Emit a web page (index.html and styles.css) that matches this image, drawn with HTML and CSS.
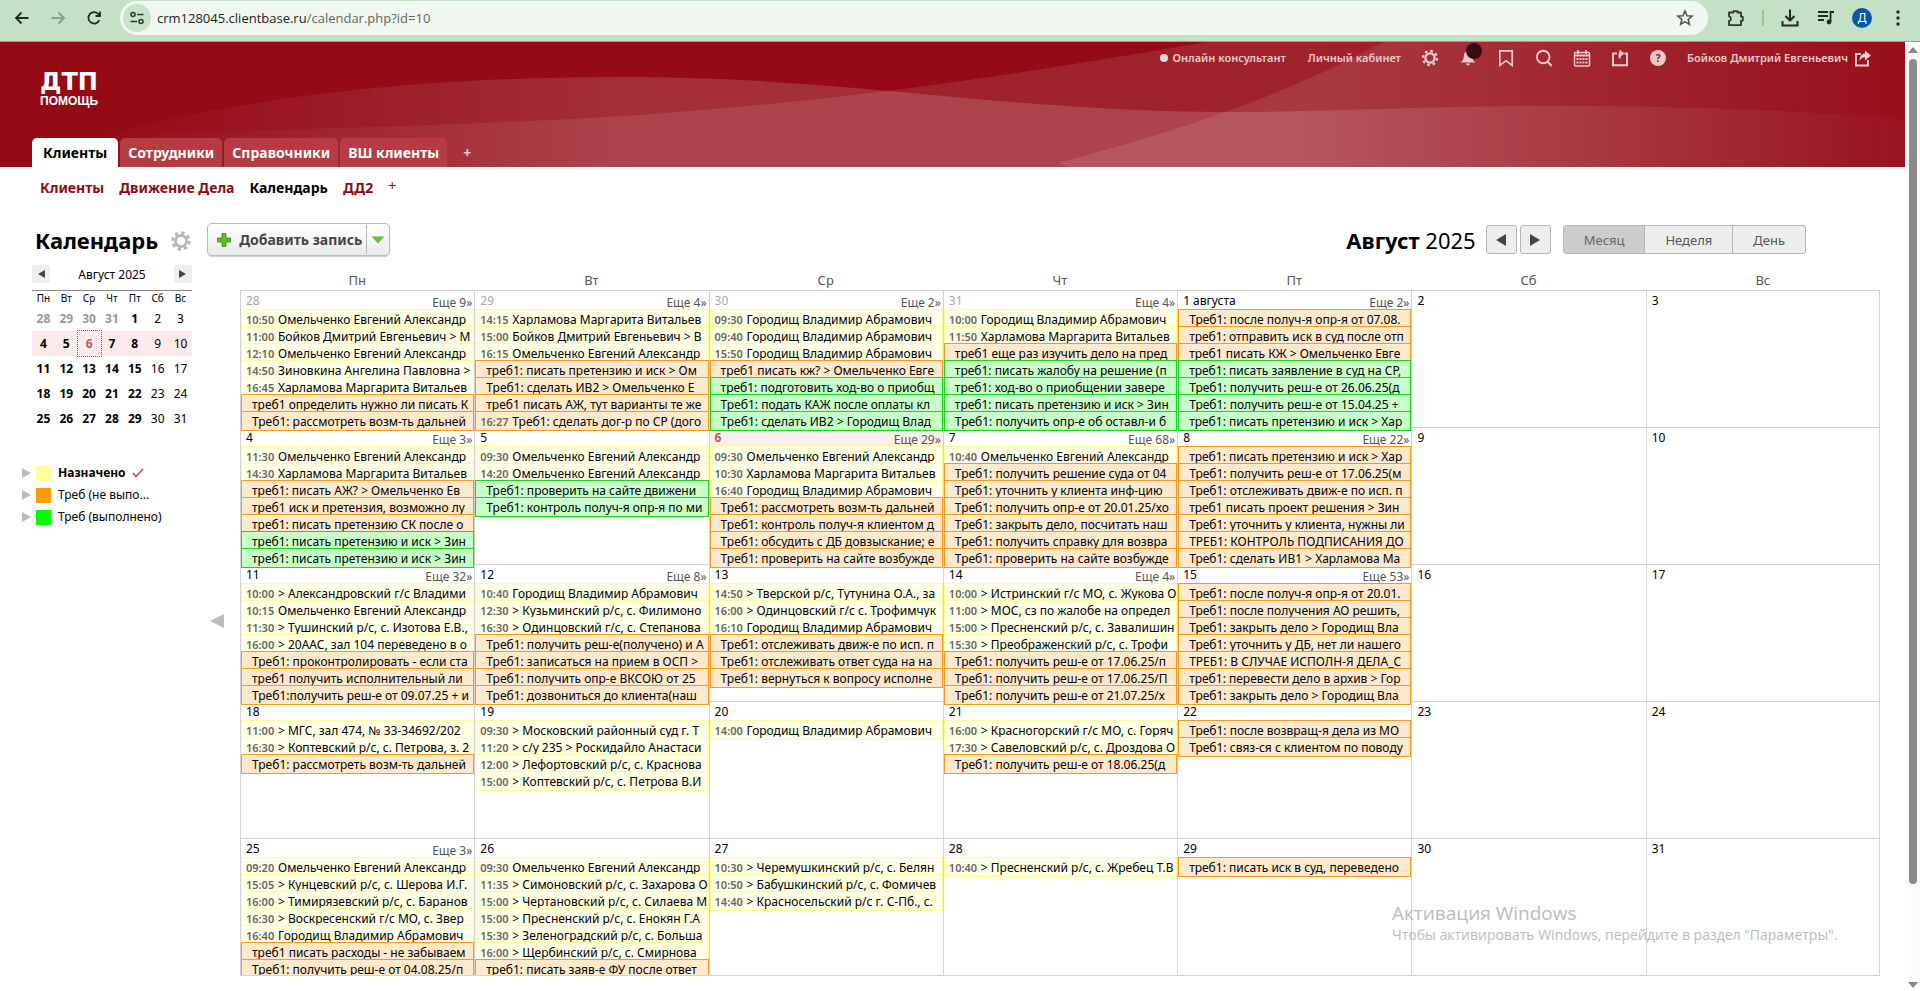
FILE: index.html
```html
<!DOCTYPE html>
<html lang="ru">
<head>
<meta charset="utf-8">
<title>Календарь</title>
<link rel="stylesheet" href="styles.css">
</head>
<body>
<div class="browser">
  <div class="browser-nav">
    <button class="tool" aria-label="Назад"><svg width="20" height="20" viewBox="0 0 20 20"><path d="M16.500 10H4M9.500 4.500L4 10l5.500 5.500" fill="none" stroke="#1f2a20" stroke-width="1.800"/></svg></button>
    <button class="tool" aria-label="Вперёд"><svg width="20" height="20" viewBox="0 0 20 20"><path d="M3.500 10H16M10.500 4.500L16 10l-5.500 5.500" fill="none" stroke="#84a085" stroke-width="1.800"/></svg></button>
    <button class="tool" aria-label="Обновить"><svg width="20" height="20" viewBox="0 0 20 20"><path d="M15.300 12.200A5.700 5.700 0 1 1 14.600 6.300L16 7.800M16 3.500V8h-4.500" fill="none" stroke="#1f2a20" stroke-width="1.800"/></svg></button>
  </div>
  <div class="address">
    <span class="site-info"><svg width="16" height="16" viewBox="0 0 16 16"><g fill="none" stroke="#2c3a2d" stroke-width="1.600"><circle cx="4" cy="4.500" r="2"/><path d="M8 4.500h6.500M1.500 11.500H8"/><circle cx="12" cy="11.500" r="2"/></g></svg></span>
    <span class="url"><span class="host">crm128045.clientbase.ru</span>/calendar.php?id=10</span>
    <button class="tool star" aria-label="В закладки"><svg width="18" height="18" viewBox="0 0 18 18"><path d="M9 2l2 4.700 5.100.4-3.900 3.300 1.200 5L9 12.700l-4.400 2.700 1.200-5L1.900 7.100 7 6.700z" fill="none" stroke="#4a554b" stroke-width="1.500"/></svg></button>
  </div>
  <div class="browser-tools">
    <button class="tool" aria-label="Расширения"><svg width="20" height="20" viewBox="0 0 20 20"><path d="M3 4.500h4.500V3.200h4v1.300H15v4.200l1.800.3v3.500l-1.800.4v4.300H3v-4.300c2.600-.5 2.600-4 0-4.500z" fill="none" stroke="#2c382d" stroke-width="1.800" stroke-linejoin="round"/></svg></button>
    <span class="tool-rule"></span>
    <button class="tool" aria-label="Загрузки"><svg width="20" height="20" viewBox="0 0 20 20"><path d="M10 1.500v10.500M5.500 8L10 12.500 14.500 8M2.500 13v4.500h15V13" fill="none" stroke="#1f2a20" stroke-width="2"/></svg></button>
    <button class="tool" aria-label="Медиа"><svg width="20" height="20" viewBox="0 0 20 20"><path d="M2 4h10M2 8h10M2 12h6M14.500 14V4H18" fill="none" stroke="#1f2a20" stroke-width="1.800"/><circle cx="13" cy="14" r="2.400" fill="#1f2a20"/></svg></button>
    <button class="avatar">Д</button>
    <button class="tool" aria-label="Меню"><svg width="20" height="20" viewBox="0 0 20 20"><g fill="#1f2a20"><circle cx="10" cy="4" r="1.700"/><circle cx="10" cy="10" r="1.700"/><circle cx="10" cy="16" r="1.700"/></g></svg></button>
  </div>
</div>

<div class="viewport">
<div class="page">
<header class="header">
  <svg class="waves" viewBox="0 0 1905 125" preserveAspectRatio="none" aria-hidden="true">
    <defs>
      <linearGradient id="g1" gradientUnits="userSpaceOnUse" x1="80" x2="1905" y1="0" y2="0"><stop offset="0" stop-color="#fff" stop-opacity="0"/><stop offset=".3" stop-color="#fff" stop-opacity=".15"/><stop offset=".65" stop-color="#fff" stop-opacity=".15"/><stop offset="1" stop-color="#fff" stop-opacity=".02"/></linearGradient>
      <linearGradient id="g2" gradientUnits="userSpaceOnUse" x1="80" x2="1905" y1="0" y2="0"><stop offset="0" stop-color="#fff" stop-opacity="0"/><stop offset=".3" stop-color="#fff" stop-opacity=".1"/><stop offset=".68" stop-color="#fff" stop-opacity=".1"/><stop offset="1" stop-color="#fff" stop-opacity=".01"/></linearGradient>
    </defs>
    <path fill="url(#g1)" d="M60 103C200 66 360 36 612 35C850 34 1000 70 1230 70C1340 70 1420 64 1560 64C1700 64 1820 70 1905 77V125H60z"/>
    <path fill="url(#g2)" d="M60 94C300 88 500 82 640 73C850 58 1000 35 1207 0H1905V125H60z"/>
    <path fill="url(#g2)" d="M1058 121C1180 88 1270 60 1384 0H1905V125H1070z"/>
  </svg>
  <div class="topline">
    <a class="online" href="#">Онлайн консультант</a>
    <a class="cabinet" href="#">Личный кабинет</a>
    <span class="icons">
      <button class="hicon" aria-label="Настройки"><svg width="18" height="18" viewBox="0 0 18 18"><circle cx="9" cy="9" r="4.600" fill="none" stroke="currentColor" stroke-width="2.400"/><circle cx="9" cy="9" r="7" fill="none" stroke="currentColor" stroke-width="2.400" stroke-dasharray="2.700 2.798"/></svg></button>
      <button class="hicon" aria-label="Уведомления"><svg width="18" height="18" viewBox="0 0 18 18"><path d="M9 2c-3 .3-4.200 2.500-4.200 5.300 0 3-1.300 4.700-3.300 6.200h15c-2-1.500-3.300-3.200-3.300-6.200C13.200 4.500 12 2.300 9 2zM7 14.500h4c0 2.600-4 2.600-4 0z" fill="currentColor"/></svg><span class="badge"></span></button>
      <button class="hicon" aria-label="Закладки"><svg width="18" height="18" viewBox="0 0 18 18"><path d="M2.800 1.800h12.400v14.700L9 11.700l-6.200 4.800z" fill="none" stroke="currentColor" stroke-width="1.700"/></svg></button>
      <button class="hicon" aria-label="Поиск"><svg width="18" height="18" viewBox="0 0 18 18"><circle cx="8.200" cy="8" r="6.300" fill="none" stroke="currentColor" stroke-width="1.900"/><path d="M12.700 12.700l4 4.300" stroke="currentColor" stroke-width="2.200"/></svg></button>
      <button class="hicon" aria-label="Календарь"><svg width="18" height="18" viewBox="0 0 18 18"><rect x="1.500" y="3.500" width="15" height="13.500" rx="1" fill="none" stroke="currentColor" stroke-width="1.500"/><path d="M1.500 6.500h15M5 1v4M13 1v4" stroke="currentColor" stroke-width="1.800"/><path d="M3.500 10h11M3.500 13.500h11" stroke="currentColor" stroke-width="2.200" stroke-dasharray="2 1"/></svg></button>
      <button class="hicon" aria-label="Обмен"><svg width="18" height="18" viewBox="0 0 18 18"><path d="M6 4.500H2v11.700h14V4.500h-2.500" fill="none" stroke="currentColor" stroke-width="2"/><path d="M7.600 9.500V3.600h2V9.500z" fill="currentColor"/><path d="M8.500 .500l5 4-5 4z" fill="currentColor"/></svg></button>
      <button class="hicon" aria-label="Помощь"><span class="help">?</span></button>
    </span>
    <a class="user" href="#">Бойков Дмитрий Евгеньевич</a>
    <button class="hicon" aria-label="Выход"><svg width="18" height="18" viewBox="0 0 18 18"><path d="M7 5H2v11.500h12V11" fill="none" stroke="currentColor" stroke-width="1.900"/><path d="M5.500 12.500C5.500 7 8 4.800 11 4.600V1.500l6 5-6 5V8.300c-2.500 0-4.200 1-5.500 4.200z" fill="currentColor"/></svg></button>
  </div>
  <a class="logo" href="#"><span class="logo-top">ДТП</span><span class="logo-sub">ПОМОЩЬ</span></a>
  <nav class="tabs">
    <a class="tab active" href="#">Клиенты</a>
    <a class="tab" href="#">Сотрудники</a>
    <a class="tab" href="#">Справочники</a>
    <a class="tab" href="#">ВШ клиенты</a>
    <a class="tab-add" href="#">+</a>
  </nav>
</header>

<nav class="subnav">
  <a href="#">Клиенты</a>
  <a href="#">Движение Дела</a>
  <a class="current" href="#">Календарь</a>
  <a href="#">ДД2</a>
  <a class="sub-add" href="#">+</a>
</nav>

<div class="titlebar">
  <h1>Календарь</h1>
  <button class="gear" aria-label="Настройка календаря"><svg width="20" height="20" viewBox="0 0 20 20"><circle cx="10" cy="10" r="5.600" fill="none" stroke="#b5b5b5" stroke-width="2.600"/><circle cx="10" cy="10" r="8.300" fill="none" stroke="#b5b5b5" stroke-width="2.800" stroke-dasharray="3.300 3.219"/></svg></button>
  <div class="add">
    <button class="add-main"><svg width="14" height="14" viewBox="0 0 14 14"><path d="M5 .500h4V5h4.500v4H9v4.500H5V9H.500V5H5z" fill="#62b92f" stroke="#4a9a22"/></svg>Добавить запись</button>
    <button class="add-more" aria-label="Ещё"><svg width="14" height="8" viewBox="0 0 14 8"><path d="M.500.500h13L7 7.500z" fill="#6cbf35"/></svg></button>
  </div>
  <h2><b>Август</b> 2025</h2>
  <button class="step" aria-label="Предыдущий месяц"><svg width="10" height="12" viewBox="0 0 10 12"><path d="M10 0v12L0 6z" fill="#444"/></svg></button>
  <button class="step" aria-label="Следующий месяц"><svg width="10" height="12" viewBox="0 0 10 12"><path d="M0 0v12l10-6z" fill="#444"/></svg></button>
  <div class="modes">
    <button class="mode on">Месяц</button><button class="mode">Неделя</button><button class="mode">День</button>
  </div>
</div>

<main class="content">
<aside class="side">
  <div class="mini-head">
    <button aria-label="Назад"><svg width="7" height="8" viewBox="0 0 7 8"><path d="M7 0v8L0 4z" fill="#444"/></svg></button>
    <span>Август 2025</span>
    <button aria-label="Вперёд"><svg width="7" height="8" viewBox="0 0 7 8"><path d="M0 0v8l7-4z" fill="#444"/></svg></button>
  </div>
  <table class="mini">
    <thead><tr><th>Пн</th><th>Вт</th><th>Ср</th><th>Чт</th><th>Пт</th><th>Сб</th><th>Вс</th></tr></thead>
    <tbody>
      <tr><td class="b off">28</td><td class="b off">29</td><td class="b off">30</td><td class="b off">31</td><td class="b">1</td><td>2</td><td>3</td></tr>
      <tr class="week"><td class="b">4</td><td class="b">5</td><td class="b now">6</td><td class="b">7</td><td class="b">8</td><td>9</td><td>10</td></tr>
      <tr><td class="b">11</td><td class="b">12</td><td class="b">13</td><td class="b">14</td><td class="b">15</td><td>16</td><td>17</td></tr>
      <tr><td class="b">18</td><td class="b">19</td><td class="b">20</td><td class="b">21</td><td class="b">22</td><td>23</td><td>24</td></tr>
      <tr><td class="b">25</td><td class="b">26</td><td class="b">27</td><td class="b">28</td><td class="b">29</td><td>30</td><td>31</td></tr>
    </tbody>
  </table>
  <ul class="legend">
    <li><i class="tri"></i><i class="swatch sy"></i><b>Назначено</b><svg width="12" height="10" viewBox="0 0 12 10"><path d="M1 5l3 3.500L11 1" fill="none" stroke="#c0575c" stroke-width="1.800"/></svg></li>
    <li><i class="tri"></i><i class="swatch so"></i>Треб (не выпо...</li>
    <li><i class="tri"></i><i class="swatch sg"></i>Треб (выполнено)</li>
  </ul>
</aside>
<button class="collapse" aria-label="Свернуть"><svg width="14" height="14" viewBox="0 0 14 14"><path d="M14 0v14L0 7z" fill="#bdbdbd"/></svg></button>

<div class="month-wrap">
<table class="month">
<thead><tr><th>Пн</th><th>Вт</th><th>Ср</th><th>Чт</th><th>Пт</th><th>Сб</th><th>Вс</th></tr></thead>
<tbody>
<tr>
<td><div class="day"><div class="dh off"><span>28</span><a href="#">Еще 9»</a></div>
<a class="ev y" href="#"><time>10:50</time>Омельченко Евгений Александр</a>
<a class="ev y" href="#"><time>11:00</time>Бойков Дмитрий Евгеньевич &gt; М</a>
<a class="ev y" href="#"><time>12:10</time>Омельченко Евгений Александр</a>
<a class="ev y" href="#"><time>14:50</time>Зиновкина Ангелина Павловна &gt;</a>
<a class="ev y" href="#"><time>16:45</time>Харламова Маргарита Витальев</a>
<a class="ev o" href="#">треб1 определить нужно ли писать К</a>
<a class="ev o" href="#">Треб1: рассмотреть возм-ть дальней</a></div></td>
<td><div class="day"><div class="dh off"><span>29</span><a href="#">Еще 4»</a></div>
<a class="ev y" href="#"><time>14:15</time>Харламова Маргарита Витальев</a>
<a class="ev y" href="#"><time>15:00</time>Бойков Дмитрий Евгеньевич &gt; В</a>
<a class="ev y" href="#"><time>16:15</time>Омельченко Евгений Александр</a>
<a class="ev o" href="#">треб1: писать претензию и иск &gt; Ом</a>
<a class="ev o" href="#">Треб1: сделать ИВ2 &gt; Омельченко Е</a>
<a class="ev o" href="#">треб1 писать АЖ, тут варианты те же</a>
<a class="ev o" href="#"><time>16:27</time>Треб1: сделать дог-р по СР (дого</a></div></td>
<td><div class="day"><div class="dh off"><span>30</span><a href="#">Еще 2»</a></div>
<a class="ev y" href="#"><time>09:30</time>Городищ Владимир Абрамович</a>
<a class="ev y" href="#"><time>09:40</time>Городищ Владимир Абрамович</a>
<a class="ev y" href="#"><time>15:50</time>Городищ Владимир Абрамович</a>
<a class="ev o" href="#">треб1 писать кж? &gt; Омельченко Евге</a>
<a class="ev g" href="#">треб1: подготовить ход-во о приобщ</a>
<a class="ev g" href="#">Треб1: подать КАЖ после оплаты кл</a>
<a class="ev g" href="#">Треб1: сделать ИВ2 &gt; Городищ Влад</a></div></td>
<td><div class="day"><div class="dh off"><span>31</span><a href="#">Еще 4»</a></div>
<a class="ev y" href="#"><time>10:00</time>Городищ Владимир Абрамович</a>
<a class="ev y" href="#"><time>11:50</time>Харламова Маргарита Витальев</a>
<a class="ev o" href="#">треб1 еще раз изучить дело на пред</a>
<a class="ev g" href="#">треб1: писать жалобу на решение (п</a>
<a class="ev g" href="#">треб1: ход-во о приобщении завере</a>
<a class="ev g" href="#">треб1: писать претензию и иск &gt; Зин</a>
<a class="ev g" href="#">Треб1: получить опр-е об оставл-и б</a></div></td>
<td><div class="day"><div class="dh"><span>1 августа</span><a href="#">Еще 2»</a></div>
<a class="ev o" href="#">Треб1: после получ-я опр-я от 07.08.</a>
<a class="ev o" href="#">треб1: отправить иск в суд после отп</a>
<a class="ev o" href="#">треб1 писать КЖ &gt; Омельченко Евге</a>
<a class="ev g" href="#">треб1: писать заявление в суд на СР,</a>
<a class="ev g" href="#">Треб1: получить реш-е от 26.06.25(д</a>
<a class="ev g" href="#">Треб1: получить реш-е от 15.04.25 +</a>
<a class="ev g" href="#">треб1: писать претензию и иск &gt; Хар</a></div></td>
<td><div class="day"><div class="dh"><span>2</span></div></div></td>
<td><div class="day"><div class="dh"><span>3</span></div></div></td>
</tr>
<tr>
<td><div class="day"><div class="dh"><span>4</span><a href="#">Еще 3»</a></div>
<a class="ev y" href="#"><time>11:30</time>Омельченко Евгений Александр</a>
<a class="ev y" href="#"><time>14:30</time>Харламова Маргарита Витальев</a>
<a class="ev o" href="#">треб1: писать АЖ? &gt; Омельченко Ев</a>
<a class="ev o" href="#">треб1 иск и претензия, возможно лу</a>
<a class="ev o" href="#">треб1: писать претензию СК после о</a>
<a class="ev g" href="#">треб1: писать претензию и иск &gt; Зин</a>
<a class="ev g" href="#">треб1: писать претензию и иск &gt; Зин</a></div></td>
<td><div class="day"><div class="dh"><span>5</span></div>
<a class="ev y" href="#"><time>09:30</time>Омельченко Евгений Александр</a>
<a class="ev y" href="#"><time>14:20</time>Омельченко Евгений Александр</a>
<a class="ev g" href="#">Треб1: проверить на сайте движени</a>
<a class="ev g" href="#">Треб1: контроль получ-я опр-я по ми</a></div></td>
<td class="today"><div class="day"><div class="dh"><span>6</span><a href="#">Еще 29»</a></div>
<a class="ev y" href="#"><time>09:30</time>Омельченко Евгений Александр</a>
<a class="ev y" href="#"><time>10:30</time>Харламова Маргарита Витальев</a>
<a class="ev y" href="#"><time>16:40</time>Городищ Владимир Абрамович</a>
<a class="ev o" href="#">Треб1: рассмотреть возм-ть дальней</a>
<a class="ev o" href="#">Треб1: контроль получ-я клиентом д</a>
<a class="ev o" href="#">Треб1: обсудить с ДБ довзыскание; е</a>
<a class="ev o" href="#">Треб1: проверить на сайте возбужде</a></div></td>
<td><div class="day"><div class="dh"><span>7</span><a href="#">Еще 68»</a></div>
<a class="ev y" href="#"><time>10:40</time>Омельченко Евгений Александр</a>
<a class="ev o" href="#">Треб1: получить решение суда от 04</a>
<a class="ev o" href="#">Треб1: уточнить у клиента инф-цию</a>
<a class="ev o" href="#">Треб1: получить опр-е от 20.01.25/хо</a>
<a class="ev o" href="#">Треб1: закрыть дело, посчитать наш</a>
<a class="ev o" href="#">Треб1: получить справку для возвра</a>
<a class="ev o" href="#">Треб1: проверить на сайте возбужде</a></div></td>
<td><div class="day"><div class="dh"><span>8</span><a href="#">Еще 22»</a></div>
<a class="ev o" href="#">треб1: писать претензию и иск &gt; Хар</a>
<a class="ev o" href="#">Треб1: получить реш-е от 17.06.25(м</a>
<a class="ev o" href="#">Треб1: отслеживать движ-е по исп. п</a>
<a class="ev o" href="#">треб1 писать проект решения &gt; Зин</a>
<a class="ev o" href="#">Треб1: уточнить у клиента, нужны ли</a>
<a class="ev o" href="#">ТРЕБ1: КОНТРОЛЬ ПОДПИСАНИЯ ДО</a>
<a class="ev o" href="#">Треб1: сделать ИВ1 &gt; Харламова Ма</a></div></td>
<td><div class="day"><div class="dh"><span>9</span></div></div></td>
<td><div class="day"><div class="dh"><span>10</span></div></div></td>
</tr>
<tr>
<td><div class="day"><div class="dh"><span>11</span><a href="#">Еще 32»</a></div>
<a class="ev y" href="#"><time>10:00</time>&gt; Александровский г/с Владими</a>
<a class="ev y" href="#"><time>10:15</time>Омельченко Евгений Александр</a>
<a class="ev y" href="#"><time>11:30</time>&gt; Тушинский р/с, с. Изотова Е.В.,</a>
<a class="ev y" href="#"><time>16:00</time>&gt; 20ААС, зал 104 переведено в о</a>
<a class="ev o" href="#">Треб1: проконтролировать - если ста</a>
<a class="ev o" href="#">треб1 получить исполнительный ли</a>
<a class="ev o" href="#">Треб1:получить реш-е от 09.07.25 + и</a></div></td>
<td><div class="day"><div class="dh"><span>12</span><a href="#">Еще 8»</a></div>
<a class="ev y" href="#"><time>10:40</time>Городищ Владимир Абрамович</a>
<a class="ev y" href="#"><time>12:30</time>&gt; Кузьминский р/с, с. Филимоно</a>
<a class="ev y" href="#"><time>16:30</time>&gt; Одинцовский г/с, с. Степанова</a>
<a class="ev o" href="#">Треб1: получить реш-е(получено) и А</a>
<a class="ev o" href="#">Треб1: записаться на прием в ОСП &gt;</a>
<a class="ev o" href="#">Треб1: получить опр-е ВКСОЮ от 25</a>
<a class="ev o" href="#">Треб1: дозвониться до клиента(наш</a></div></td>
<td><div class="day"><div class="dh"><span>13</span></div>
<a class="ev y" href="#"><time>14:50</time>&gt; Тверской р/с, Тутунина О.А., за</a>
<a class="ev y" href="#"><time>16:00</time>&gt; Одинцовский г/с с. Трофимчук</a>
<a class="ev y" href="#"><time>16:10</time>Городищ Владимир Абрамович</a>
<a class="ev o" href="#">Треб1: отслеживать движ-е по исп. п</a>
<a class="ev o" href="#">Треб1: отслеживать ответ суда на на</a>
<a class="ev o" href="#">Треб1: вернуться к вопросу исполне</a></div></td>
<td><div class="day"><div class="dh"><span>14</span><a href="#">Еще 4»</a></div>
<a class="ev y" href="#"><time>10:00</time>&gt; Истринский г/с МО, с. Жукова О</a>
<a class="ev y" href="#"><time>11:00</time>&gt; МОС, сз по жалобе на определ</a>
<a class="ev y" href="#"><time>15:00</time>&gt; Пресненский р/с, с. Завалишин</a>
<a class="ev y" href="#"><time>15:30</time>&gt; Преображенский р/с, с. Трофи</a>
<a class="ev o" href="#">Треб1: получить реш-е от 17.06.25/п</a>
<a class="ev o" href="#">Треб1: получить реш-е от 17.06.25/П</a>
<a class="ev o" href="#">Треб1: получить реш-е от 21.07.25/х</a></div></td>
<td><div class="day"><div class="dh"><span>15</span><a href="#">Еще 53»</a></div>
<a class="ev o" href="#">Треб1: после получ-я опр-я от 20.01.</a>
<a class="ev o" href="#">Треб1: после получения АО решить,</a>
<a class="ev o" href="#">Треб1: закрыть дело &gt; Городищ Вла</a>
<a class="ev o" href="#">Треб1: уточнить у ДБ, нет ли нашего</a>
<a class="ev o" href="#">ТРЕБ1: В СЛУЧАЕ ИСПОЛН-Я ДЕЛА_С</a>
<a class="ev o" href="#">треб1: перевести дело в архив &gt; Гор</a>
<a class="ev o" href="#">Треб1: закрыть дело &gt; Городищ Вла</a></div></td>
<td><div class="day"><div class="dh"><span>16</span></div></div></td>
<td><div class="day"><div class="dh"><span>17</span></div></div></td>
</tr>
<tr>
<td><div class="day"><div class="dh"><span>18</span></div>
<a class="ev y" href="#"><time>11:00</time>&gt; МГС, зал 474, № 33-34692/202</a>
<a class="ev y" href="#"><time>16:30</time>&gt; Коптевский р/с, с. Петрова, з. 2</a>
<a class="ev o" href="#">Треб1: рассмотреть возм-ть дальней</a></div></td>
<td><div class="day"><div class="dh"><span>19</span></div>
<a class="ev y" href="#"><time>09:30</time>&gt; Московский районный суд г. Т</a>
<a class="ev y" href="#"><time>11:20</time>&gt; с/у 235 &gt; Роскидайло Анастаси</a>
<a class="ev y" href="#"><time>12:00</time>&gt; Лефортовский р/с, с. Краснова</a>
<a class="ev y" href="#"><time>15:00</time>&gt; Коптевский р/с, с. Петрова В.И</a></div></td>
<td><div class="day"><div class="dh"><span>20</span></div>
<a class="ev y" href="#"><time>14:00</time>Городищ Владимир Абрамович</a></div></td>
<td><div class="day"><div class="dh"><span>21</span></div>
<a class="ev y" href="#"><time>16:00</time>&gt; Красногорский г/с МО, с. Горяч</a>
<a class="ev y" href="#"><time>17:30</time>&gt; Савеловский р/с, с. Дроздова О</a>
<a class="ev o" href="#">Треб1: получить реш-е от 18.06.25(д</a></div></td>
<td><div class="day"><div class="dh"><span>22</span></div>
<a class="ev o" href="#">Треб1: после возвращ-я дела из МО</a>
<a class="ev o" href="#">Треб1: связ-ся с клиентом по поводу</a></div></td>
<td><div class="day"><div class="dh"><span>23</span></div></div></td>
<td><div class="day"><div class="dh"><span>24</span></div></div></td>
</tr>
<tr class="last">
<td><div class="day"><div class="dh"><span>25</span><a href="#">Еще 3»</a></div>
<a class="ev y" href="#"><time>09:20</time>Омельченко Евгений Александр</a>
<a class="ev y" href="#"><time>15:05</time>&gt; Кунцевский р/с, с. Шерова И.Г.</a>
<a class="ev y" href="#"><time>16:00</time>&gt; Тимирязевский р/с, с. Баранов</a>
<a class="ev y" href="#"><time>16:30</time>&gt; Воскресенский г/с МО, с. Звер</a>
<a class="ev y" href="#"><time>16:40</time>Городищ Владимир Абрамович</a>
<a class="ev o" href="#">треб1 писать расходы - не забываем</a>
<a class="ev o" href="#">Треб1: получить реш-е от 04.08.25/п</a></div></td>
<td><div class="day"><div class="dh"><span>26</span></div>
<a class="ev y" href="#"><time>09:30</time>Омельченко Евгений Александр</a>
<a class="ev y" href="#"><time>11:35</time>&gt; Симоновский р/с, с. Захарова О</a>
<a class="ev y" href="#"><time>15:00</time>&gt; Чертановский р/с, с. Силаева М</a>
<a class="ev y" href="#"><time>15:00</time>&gt; Пресненский р/с, с. Енокян Г.А</a>
<a class="ev y" href="#"><time>15:30</time>&gt; Зеленоградский р/с, с. Больша</a>
<a class="ev y" href="#"><time>16:00</time>&gt; Щербинский р/с, с. Смирнова</a>
<a class="ev o" href="#">треб1: писать заяв-е ФУ после ответ</a></div></td>
<td><div class="day"><div class="dh"><span>27</span></div>
<a class="ev y" href="#"><time>10:30</time>&gt; Черемушкинский р/с, с. Белян</a>
<a class="ev y" href="#"><time>10:50</time>&gt; Бабушкинский р/с, с. Фомичев</a>
<a class="ev y" href="#"><time>14:40</time>&gt; Красносельский р/с г. С-Пб., с.</a></div></td>
<td><div class="day"><div class="dh"><span>28</span></div>
<a class="ev y" href="#"><time>10:40</time>&gt; Пресненский р/с, с. Жребец Т.В</a></div></td>
<td><div class="day"><div class="dh"><span>29</span></div>
<a class="ev o" href="#">треб1: писать иск в суд, переведено</a></div></td>
<td><div class="day"><div class="dh"><span>30</span></div></div></td>
<td><div class="day"><div class="dh"><span>31</span></div></div></td>
</tr>
</tbody>
</table>
</div>
</main>
<div class="watermark"><p class="wm-title">Активация Windows</p><p>Чтобы активировать Windows, перейдите в раздел "Параметры".</p></div>
</div>
<div class="scrollbar" aria-hidden="true"><i class="up"></i><i class="track"><i class="thumb"></i></i><i class="down"></i></div>
</div>
</body>
</html>
```

FILE: styles.css
```css
* { box-sizing: border-box; }
html, body { height: 100%; }
body {
  margin: 0;
  display: flex;
  flex-direction: column;
  overflow: hidden;
  background: #fff;
  color: #000;
  font: 12px/16px "Noto Sans", "Open Sans", sans-serif;
}
a { color: inherit; text-decoration: none; }
button {
  font: inherit;
  color: inherit;
  padding: 0;
  border: 0;
  background: none;
}
svg { display: block; }
h1, h2, p, ul { margin: 0; padding: 0; }

/* browser toolbar */
.browser {
  display: flex;
  align-items: center;
  flex: none;
  height: 42px;
  padding-bottom: 6px;
  background: #c4e0c5;
  border-bottom: 1px solid #8fa890;
}
.browser-nav {
  display: flex;
  gap: 16px;
  padding: 0 16px 0 12px;
}
.tool {
  display: flex;
  flex: none;
}
.address {
  display: flex;
  align-items: center;
  flex: 1;
  height: 34px;
  padding: 0 14px 0 2px;
  border-radius: 17px;
  background: #f0f8f1;
}
.site-info {
  display: flex;
  align-items: center;
  justify-content: center;
  width: 28px;
  height: 28px;
  margin: 0 6px 0 1px;
  border-radius: 50%;
  background: #c9e3ca;
}
.url {
  flex: 1;
  font: 13px/18px "Open Sans", sans-serif;
  color: #5e675f;
}
.host { color: #1f241f; }
.browser-tools {
  display: flex;
  align-items: center;
  gap: 16px;
  padding: 0 12px 0 18px;
}
.tool-rule {
  width: 2px;
  height: 16px;
  background: #93c896;
}
.avatar {
  width: 20px;
  height: 20px;
  border-radius: 50%;
  background: #0b57a4;
  color: #fff;
}

/* page and scrollbar */
.viewport {
  display: flex;
  flex: 1;
  min-height: 0;
}
.page {
  position: relative;
  flex: 1;
  min-width: 0;
  overflow: hidden;
}
.scrollbar {
  display: flex;
  flex-direction: column;
  align-items: center;
  width: 15px;
  padding: 5px 0 3px;
  background: #fcfcfc;
}
.up, .down {
  border: 5px solid transparent;
}
.up { border-top: 0; border-bottom: 6px solid #858585; }
.down { border-bottom: 0; border-top: 6px solid #858585; }
.track {
  flex: 1;
  width: 8px;
  padding: 6px 0;
}
.thumb {
  display: block;
  height: 90%;
  border-radius: 4px;
  background: #8b8b8b;
}

/* header */
.header {
  position: relative;
  display: flex;
  flex-direction: column;
  height: 125px;
  background: #950a14;
  color: #fff;
}
.waves {
  position: absolute;
  inset: 0;
  width: 100%;
  height: 100%;
}
.topline, .logo, .tabs { position: relative; }
.topline {
  display: flex;
  align-items: center;
  justify-content: flex-end;
  height: 31px;
  padding: 0 33px 0 0;
  font-size: 11px;
  font-weight: 600;
  color: #ebc9cc;
}
.online::before {
  content: "";
  display: inline-block;
  width: 8px;
  height: 8px;
  margin-right: 5px;
  border-radius: 50%;
  background: #ebd2d4;
}
.cabinet { margin-left: 22px; }
.icons {
  display: flex;
  gap: 20px;
  margin: 0 20px;
}
.hicon {
  position: relative;
  display: flex;
}
.badge {
  position: absolute;
  top: -6px;
  right: -5px;
  width: 16px;
  height: 16px;
  border-radius: 50%;
  background: #3a0a12;
}
.help {
  width: 16px;
  height: 16px;
  margin: 1px;
  border-radius: 50%;
  background: #ebc9cc;
  color: #8f1a24;
  font-weight: 700;
  text-align: center;
}
.user { margin-right: 6px; }
.logo {
  display: flex;
  flex-direction: column;
  align-self: flex-start;
  margin-left: 40px;
  font-weight: 700;
}
.logo-top {
  font-family: "DejaVu Sans", sans-serif;
  font-size: 24px;
  line-height: 18px;
}
.logo-sub {
  margin-top: 3px;
  font-family: "Liberation Sans", sans-serif;
  font-size: 12px;
  line-height: 14px;
}
.tabs {
  display: flex;
  gap: 2px;
  margin-top: auto;
  padding-left: 32px;
  font-size: 14px;
  font-weight: 700;
  line-height: 29px;
}
.tab {
  padding: 0 8px;
  border-radius: 5px 5px 0 0;
  background: #b83a45;
}
.tab.active {
  padding: 0 11px;
  background: #fff;
  color: #000;
}
.tab-add {
  padding-left: 14px;
  color: #ebc9cc;
}

.subnav {
  display: flex;
  gap: 15px;
  padding: 11px 40px 0;
  font-size: 14px;
  font-weight: 700;
  line-height: 20px;
  color: #8d0b17;
}
.subnav .current { color: #000; }
.sub-add { font-weight: 400; line-height: 16px; }

/* title row */
.titlebar {
  display: flex;
  align-items: center;
  padding: 25px 99px 9px 35px;
}
h1 {
  font-size: 22px;
  line-height: 30px;
}
.gear { margin: 2px 16px 0 13px; }
.add {
  display: flex;
  height: 33px;
  border: 1px solid #b9b9b9;
  border-radius: 5px;
  background: linear-gradient(#fff, #ebebeb);
  box-shadow: 0 1px 1px #ccc;
  color: #444;
}
.add-main {
  display: flex;
  align-items: center;
  gap: 8px;
  padding: 0 4px 0 9px;
  font-size: 14px;
  font-weight: 700;
}
.add-more {
  padding: 0 4px;
  margin: 1px 0;
  border-left: 1px solid #b9b9b9;
}
h2 {
  margin-left: auto;
  margin-right: 10px;
  font-size: 22px;
  font-weight: 400;
  line-height: 30px;
}
.step {
  display: flex;
  align-items: center;
  justify-content: center;
  width: 31px;
  height: 29px;
  margin-right: 3px;
  border: 1px solid #b5b5b5;
  border-radius: 3px;
  background: #eee;
}
.modes {
  display: flex;
  height: 29px;
  margin-left: 9px;
  border: 1px solid #b5b5b5;
  border-radius: 3px;
  background: #eee;
  font-size: 13px;
  color: #555;
}
.mode { padding: 0 20px; }
.mode + .mode { border-left: 1px solid #b5b5b5; }
.mode.on { background: #ccc; color: #666; }

/* content */
.content {
  display: flex;
  align-items: flex-start;
  padding-right: 25px;
}
.side {
  flex: none;
  width: 192px;
  padding-left: 22px;
}
.mini-head {
  display: flex;
  justify-content: space-between;
  margin-left: 10px;
  padding-bottom: 5px;
  border-bottom: 1px solid #888;
  line-height: 20px;
}
.mini-head button {
  display: flex;
  align-items: center;
  justify-content: center;
  width: 18px;
  height: 18px;
  border-radius: 2px;
  background: #eee;
}
.mini {
  width: 160px;
  margin-left: 10px;
  border-collapse: collapse;
  table-layout: fixed;
  text-align: center;
}
.mini th {
  height: 15px;
  padding: 0;
  font-size: 10px;
  font-weight: 400;
  line-height: 15px;
}
.mini td {
  height: 25px;
  padding: 0;
}
.b { font-weight: 700; }
.mini .off { color: #999; }
.week { background: #fdeaea; }
.mini .now { color: #c4595f; outline: 1px dotted #666; }
.legend {
  list-style: none;
  margin-top: 31px;
}
.legend li {
  display: flex;
  align-items: center;
  height: 22px;
}
.legend svg { margin-left: 6px; }
.tri {
  border: 5px solid transparent;
  border-left: 9px solid #bbb;
  border-right: 0;
}
.swatch {
  width: 15px;
  height: 15px;
  margin: 0 7px 0 5px;
}
.sy { background: #ffff99; }
.so { background: #ff9900; }
.sg { background: #00ff00; }
.collapse {
  align-self: center;
  width: 14px;
  margin: 0 16px 0 18px;
}

.month-wrap {
  flex: 1;
  min-width: 0;
}
.month {
  width: 100%;
  border-spacing: 0;
  table-layout: fixed;
}
.month th {
  height: 25px;
  padding: 6px 0 1px;
  font-size: 13px;
  font-weight: 400;
  line-height: 16px;
  color: #555;
}
.month td {
  height: 137px;
  padding: 0;
  vertical-align: top;
  border-top: 1px solid #d3d3d3;
  border-left: 1px solid #d3d3d3;
}
.month td:last-child { border-right: 1px solid #d3d3d3; }
.last td { border-bottom: 1px solid #d3d3d3; }
.day {
  display: flex;
  flex-direction: column;
  height: 136px;
}
.last .day { overflow: hidden; }
.dh {
  display: flex;
  justify-content: space-between;
  flex: none;
  height: 18px;
  padding: 2px 2px 0 5px;
}
.dh a { padding-top: 2px; color: #555; }
.dh.off span { color: #aaa; }
.today .dh { background: #fdeeee; }
.today .dh span { color: #c4595f; font-weight: 700; }
.ev {
  position: relative;
  flex: none;
  height: 20px;
  margin-bottom: -3px;
  padding: 1px 0 0 10px;
  overflow: hidden;
  white-space: nowrap;
  line-height: 18px;
  border: 1px solid;
}
.ev:has(time) { padding-left: 4px; }
.ev time {
  display: inline-block;
  width: 32px;
  font-size: 11px;
  font-weight: 600;
  color: #666;
}
.y { background: #ffffe5; border-color: #ffff99; }
.o { background: #ffe9cc; border-color: #f79a1c; }
.g { background: #c8ffc8; border-color: #18d718; }

.watermark {
  position: absolute;
  z-index: 2;
  left: 1392px;
  bottom: 45px;
  font: 14px/22px "Open Sans", sans-serif;
  color: #bbb;
}
.wm-title { font-size: 19px; }
```
